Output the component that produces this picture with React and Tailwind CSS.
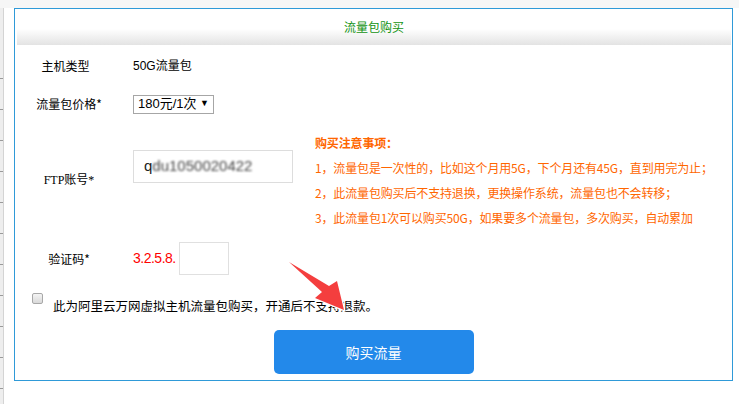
import React from "react";

const notes = [
  "1，流量包是一次性的，比如这个月用5G，下个月还有45G，直到用完为止；",
  "2，此流量包购买后不支持退换，更换操作系统，流量包也不会转移；",
  "3，此流量包1次可以购买50G，如果要多个流量包，多次购买，自动累加",
];

const Ruler = () => (
  <svg width="4" height="396" className="block">
    <rect x="0" y="0" width="3" height="396" fill="#eeeeee" />
    <rect x="3" y="0" width="1" height="396" fill="#d4d4d4" />
    {[70, 101, 132, 163, 194, 225, 256, 287, 318, 349, 380].map((y) => (
      <rect key={y} x="0" y={y} width="3" height="1" fill="#9a9a9a" />
    ))}
  </svg>
);

// red annotation arrow drawn over the form
const Arrow = () => (
  <svg
    width="739"
    height="404"
    className="absolute left-[-14px] top-[-8px] pointer-events-none"
  >
    <polygon
      points="288,261 328,285 336,280 343,309 314,297 321,291"
      fill="#f43e3e"
      stroke="#ffffff"
      strokeWidth="2.5"
      strokeLinejoin="round"
      paintOrder="stroke"
    />
  </svg>
);

const App = () => {
  return (
    <div className="w-[739px] h-[404px] bg-white overflow-hidden font-['Noto_Sans_CJK_SC',sans-serif] text-[12px] text-black">
      <div className="h-[8px] bg-[#f6f6f6]" />
      <div className="flex">
        <div className="w-[14px]">
          <Ruler />
        </div>
        <div className="relative w-[719px] h-[373px] border border-[#2f9ad8] flex flex-col">
          <div className="ml-[2px] mr-[1px] h-[36px] flex items-center justify-center bg-[linear-gradient(to_bottom,#ffffff_55%,#e3e3e3)] text-[#139313] text-[12px]">
            流量包购买
          </div>

          {/* 主机类型 */}
          <div className="flex items-center h-[42px]">
            <div className="w-[108px] text-center pr-[7px]">主机类型</div>
            <div className="pl-[10px] font-['Liberation_Sans','Noto_Sans_CJK_SC',sans-serif]">
              50G流量包
            </div>
          </div>

          {/* 价格 */}
          <div className="flex items-center h-[34px]">
            <div className="w-[108px] text-center">流量包价格*</div>
            <div className="pl-[10px]">
              <div className="w-[81px] h-[19px] border border-[#a6a6a6] flex items-center justify-between px-[4px] text-[13px] font-['Liberation_Sans','Noto_Sans_CJK_SC',sans-serif]">
                <span>180元/1次</span>
                <span className="text-[9px]">▼</span>
              </div>
            </div>
          </div>

          {/* FTP */}
          <div className="flex items-center h-[118px]">
            <div className="w-[108px] text-center font-['Liberation_Serif','Noto_Sans_CJK_SC',serif]">
              FTP账号*
            </div>
            <div className="self-start pt-[29px] pl-[10px]">
              <div className="w-[160px] h-[33px] border border-[#dddddd] flex items-center pl-[10px] text-[15px] text-[#222] font-['Liberation_Sans',sans-serif]">
                <span>q</span>
                <span className="blur-[0.8px] text-[#444]">du1050020422</span>
              </div>
            </div>
            <div className="ml-[22px] flex flex-col text-[#ff6600] leading-[25px] tracking-[-0.15px]">
              <div className="font-bold">购买注意事项：</div>
              {notes.map((n) => (
                <div key={n}>{n}</div>
              ))}
            </div>
          </div>

          {/* 验证码 */}
          <div className="flex items-center h-[39px]">
            <div className="w-[108px] text-center">验证码*</div>
            <div className="pl-[10px] flex items-center">
              <span className="w-[46px] text-[#ff0000] text-[14px] tracking-[-0.5px] font-['Liberation_Sans',sans-serif]">
                3.2.5.8.
              </span>
              <div className="w-[50px] h-[33px] border border-[#e0e0e0]" />
            </div>
          </div>

          {/* checkbox */}
          <div className="flex items-start h-[44px] pl-[17px]">
            <div className="mt-[15px] w-[11px] h-[11px] rounded-[2px] border border-[#a8a8a8] bg-[linear-gradient(to_bottom,#f4f4f4,#d9d9d9)]" />
            <div className="ml-[10px] mt-[20px] leading-[16px] text-[12.5px]">
              此为阿里云万网虚拟主机流量包购买，开通后不支持退款。
            </div>
          </div>

          <div className="mt-[8px] flex justify-center">
            <button className="w-[200px] h-[44px] rounded-[5px] bg-[#2389ea] text-white text-[14px]">
              购买流量
            </button>
          </div>

          <Arrow />
        </div>
      </div>
    </div>
  );
};

export default App;
